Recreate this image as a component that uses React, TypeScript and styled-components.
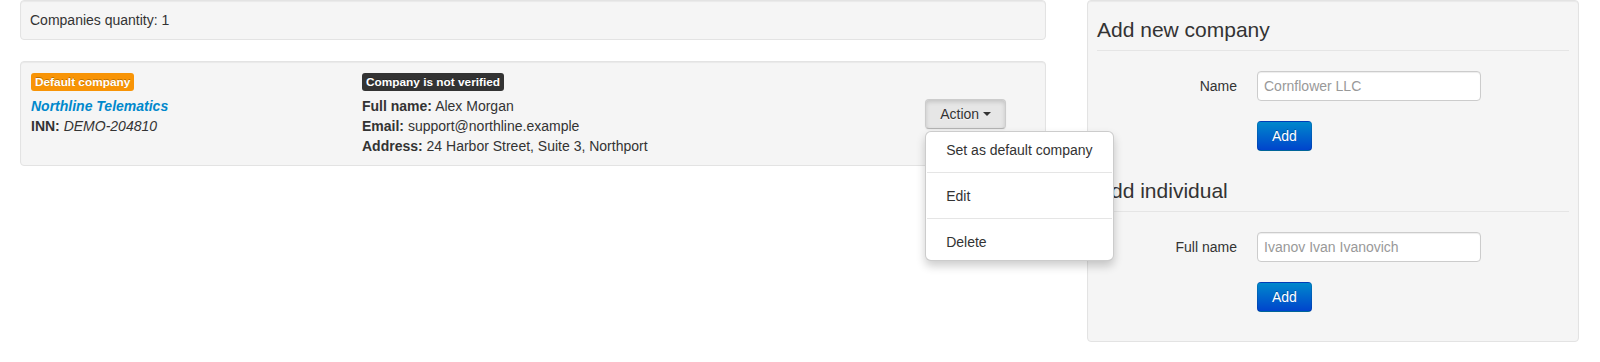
import { FC } from 'react';
import styled, { createGlobalStyle, css } from 'styled-components';

const GlobalStyle = createGlobalStyle`
  body {
    margin: 0;
    background: #fff;
    color: #333;
    font-family: 'Liberation Sans', Arial, sans-serif;
    font-size: 14px;
    line-height: 20px;
  }
`;

const Page = styled.div`
  display: flex;
  align-items: flex-start;
  gap: 41px;
  padding: 0 21px 0 20px;
`;

const Main = styled.div`
  flex: 0 0 1026px;
`;

const Sidebar = styled.div`
  flex: 0 0 492px;
`;

const Well = styled.div`
  background: #f5f5f5;
  border: 1px solid #e3e3e3;
  border-radius: 4px;
  box-shadow: inset 0 1px 1px rgba(0, 0, 0, 0.05);
  padding: 9px;
`;

const CountWell = styled(Well)`
  margin-bottom: 21px;
`;

const CompanyCard = styled(Well)`
  display: flex;
  padding: 9px 10px;
`;

const MainCol = styled.div`
  flex: 0 0 331px;
`;

const ContactsCol = styled.div`
  flex: 1;
`;

const ActionsCol = styled.div`
  align-self: center;
  padding-right: 29px;
`;

const BadgeRow = styled.div`
  margin-bottom: 5px;
`;

const Badge = styled.span<{ $tone: 'warning' | 'inverse' }>`
  display: inline-block;
  padding: 2px 4px;
  border-radius: 3px;
  font-size: 11.844px;
  font-weight: bold;
  line-height: 14px;
  color: #fff;
  text-shadow: 0 -1px 0 rgba(0, 0, 0, 0.25);
  white-space: nowrap;
  background: ${(p) => (p.$tone === 'warning' ? '#f89406' : '#333')};
`;

const CompanyLink = styled.a`
  display: block;
  color: #0088cc;
  font-weight: bold;
  font-style: italic;
  text-decoration: none;
`;

const Line = styled.div``;

const Dropdown = styled.div`
  position: relative;
  display: inline-block;
`;

const Button = styled.button<{ $primary?: boolean; $open?: boolean }>`
  display: inline-block;
  padding: 4px 14px;
  font-family: inherit;
  font-size: 14px;
  line-height: 20px;
  border-radius: 4px;
  cursor: pointer;
  ${(p) =>
    p.$primary
      ? css`
          color: #fff;
          text-shadow: 0 -1px 0 rgba(0, 0, 0, 0.25);
          background: linear-gradient(to bottom, #0088cc, #0044cc);
          border: 1px solid rgba(0, 0, 0, 0.1);
          border-bottom-color: rgba(0, 0, 0, 0.25);
        `
      : css`
          color: #333;
          text-shadow: 0 1px 1px rgba(255, 255, 255, 0.75);
          background: ${p.$open ? '#e6e6e6' : 'linear-gradient(to bottom, #fff, #e6e6e6)'};
          border: 1px solid #ccc;
          border-bottom-color: #b3b3b3;
          box-shadow: ${p.$open
            ? 'inset 0 2px 4px rgba(0, 0, 0, 0.15), 0 1px 2px rgba(0, 0, 0, 0.05)'
            : 'inset 0 1px 0 rgba(255, 255, 255, 0.2), 0 1px 2px rgba(0, 0, 0, 0.05)'};
        `}
`;

const Caret = styled.span`
  display: inline-block;
  width: 0;
  height: 0;
  margin-top: 8px;
  vertical-align: top;
  border-top: 4px solid #333;
  border-left: 4px solid transparent;
  border-right: 4px solid transparent;
`;

const Menu = styled.ul`
  position: absolute;
  top: 100%;
  left: 0;
  z-index: 1000;
  min-width: 160px;
  margin: 2px 0 0;
  padding: 5px 0;
  list-style: none;
  background: #fff;
  border: 1px solid rgba(0, 0, 0, 0.2);
  border-radius: 6px;
  box-shadow: 0 5px 10px rgba(0, 0, 0, 0.2);
`;

const MenuItem = styled.li`
  a {
    display: block;
    padding: 3px 20px;
    color: #333;
    white-space: nowrap;
    text-decoration: none;
  }
`;

const Divider = styled.li`
  height: 1px;
  margin: 9px 1px;
  background: #e5e5e5;
  border-bottom: 1px solid #fff;
`;

const FormWell = styled(Well)`
  margin-bottom: 20px;
`;

const Legend = styled.div`
  font-size: 21px;
  line-height: 40px;
  color: #333;
  border-bottom: 1px solid #e5e5e5;
  margin-bottom: 20px;
`;

const ControlGroup = styled.div`
  display: flex;
  margin-bottom: 20px;
`;

const ControlLabel = styled.label`
  flex: 0 0 140px;
  margin-right: 20px;
  padding-top: 5px;
  text-align: right;
`;

const Controls = styled.div<{ $offset?: boolean }>`
  margin-left: ${(p) => (p.$offset ? '160px' : '0')};
`;

const TextInput = styled.input`
  box-sizing: border-box;
  width: 224px;
  height: 30px;
  padding: 4px 6px;
  font-family: inherit;
  font-size: 14px;
  line-height: 20px;
  color: #555;
  background: #fff;
  border: 1px solid #ccc;
  border-radius: 4px;
  box-shadow: inset 0 1px 1px rgba(0, 0, 0, 0.075);
  &::placeholder {
    color: #999;
  }
`;

type FieldProps = { label: string; placeholder: string };

const FormSection: FC<FieldProps & { title: string }> = ({ title, label, placeholder }) => (
  <>
    <Legend>{title}</Legend>
    <ControlGroup>
      <ControlLabel>{label}</ControlLabel>
      <TextInput placeholder={placeholder} />
    </ControlGroup>
    <ControlGroup>
      <Controls $offset>
        <Button $primary>Add</Button>
      </Controls>
    </ControlGroup>
  </>
);

const App: FC = () => (
  <>
    <GlobalStyle />
    <Page>
      <Main>
        <CountWell>Companies quantity: 1</CountWell>
        <CompanyCard>
          <MainCol>
            <BadgeRow>
              <Badge $tone="warning">Default company</Badge>
            </BadgeRow>
            <CompanyLink href="#">Northline Telematics</CompanyLink>
            <Line>
              <b>INN:</b> <em>DEMO-204810</em>
            </Line>
          </MainCol>
          <ContactsCol>
            <BadgeRow>
              <Badge $tone="inverse">Company is not verified</Badge>
            </BadgeRow>
            <Line>
              <b>Full name:</b> Alex Morgan
            </Line>
            <Line>
              <b>Email:</b> support@northline.example
            </Line>
            <Line>
              <b>Address:</b> 24 Harbor Street, Suite 3, Northport
            </Line>
          </ContactsCol>
          <ActionsCol>
            <Dropdown>
              <Button $open>
                Action <Caret />
              </Button>
              <Menu>
                <MenuItem>
                  <a href="#">Set as default company</a>
                </MenuItem>
                <Divider />
                <MenuItem>
                  <a href="#">Edit</a>
                </MenuItem>
                <Divider />
                <MenuItem>
                  <a href="#">Delete</a>
                </MenuItem>
              </Menu>
            </Dropdown>
          </ActionsCol>
        </CompanyCard>
      </Main>
      <Sidebar>
        <FormWell>
          <FormSection title="Add new company" label="Name" placeholder="Cornflower LLC" />
          <FormSection title="Add individual" label="Full name" placeholder="Ivanov Ivan Ivanovich" />
        </FormWell>
      </Sidebar>
    </Page>
  </>
);

export default App;
